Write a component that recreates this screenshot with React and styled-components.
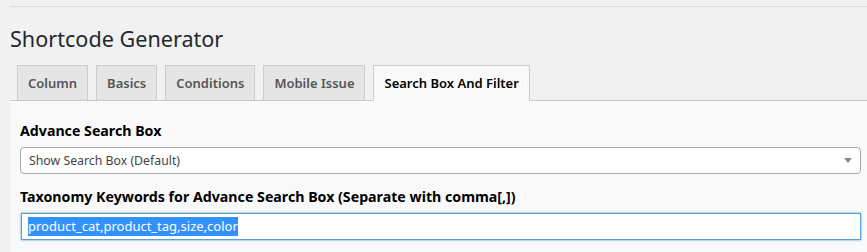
import React from 'react';
import styled, { createGlobalStyle } from 'styled-components';

const Global = createGlobalStyle`
  html, body { margin: 0; padding: 0; background: #f1f1f1; }
  body { font-family: "Noto Sans", "Open Sans", sans-serif; color: #23282d; }
  * { box-sizing: border-box; }
`;

const Page = styled.div`
  padding: 6px 0 0 10px;
  height: 252px;
  overflow: hidden;
`;

const TopRule = styled.div`
  height: 1px;
  background: #dcdcdc;
`;

const Title = styled.h1`
  margin: 17px 0 0;
  font-size: 21.6px;
  font-weight: 400;
  line-height: 29px;
  color: #23282d;
`;

const TabBar = styled.nav`
  display: flex;
  gap: 8px;
  margin-top: 12px;
  padding-left: 7px;
  border-bottom: 1px solid #ccc;
`;

const Tab = styled.a`
  display: block;
  padding: 5px 10px;
  margin-bottom: -1px;
  font-size: 13px;
  font-weight: 600;
  line-height: 24px;
  border: 1px solid #ccc;
  border-bottom-color: ${p => (p.$active ? '#f9f9f9' : '#ccc')};
  background: ${p => (p.$active ? '#f9f9f9' : '#e5e5e5')};
  color: ${p => (p.$active ? '#000' : '#555')};
  text-decoration: none;
  white-space: nowrap;
`;

const Panel = styled.div`
  background: #f9f9f9;
  padding: 20px 6px 40px 10px;
`;

const Label = styled.div`
  font-size: 14.2px;
  font-weight: 700;
  line-height: 20px;
  color: #000;
  margin: ${p => (p.$first ? '0' : '13px')} 0 6px;
`;

const SelectBox = styled.div`
  display: flex;
  align-items: center;
  justify-content: space-between;
  height: 27px;
  padding: 0 8px;
  background: #fff;
  border: 1px solid #aaa;
  border-radius: 4px;
  font-size: 12.3px;
  color: #444;
`;

const Caret = styled.span`
  width: 0;
  height: 0;
  border-style: solid;
  border-width: 5px 4px 0 4px;
  border-color: #888 transparent transparent transparent;
`;

const TextField = styled.div`
  display: flex;
  align-items: center;
  height: 27px;
  margin: 0 0 0 1px;
  padding: 0 6px;
  background: #fff;
  border: 1px solid #5b9dd9;
  box-shadow: 0 0 2px rgba(30, 140, 190, 0.8);
  font-size: 13px;
  color: #32373c;
`;

const Selected = styled.span`
  background: #3390ff;
  color: #fff;
  line-height: 19px;
`;

const tabs = ['Column', 'Basics', 'Conditions', 'Mobile Issue', 'Search Box And Filter'];

export default function App() {
  return (
    <>
      <Global />
      <Page>
        <TopRule />
        <Title>Shortcode Generator</Title>
        <TabBar>
          {tabs.map((t, i) => (
            <Tab key={t} $active={i === tabs.length - 1}>{t}</Tab>
          ))}
        </TabBar>
        <Panel>
          <Label $first>Advance Search Box</Label>
          <SelectBox>
            <span>Show Search Box (Default)</span>
            <Caret />
          </SelectBox>
          <Label>Taxonomy Keywords for Advance Search Box (Separate with comma[,])</Label>
          <TextField>
            <Selected>product_cat,product_tag,size,color</Selected>
          </TextField>
        </Panel>
      </Page>
    </>
  );
}
